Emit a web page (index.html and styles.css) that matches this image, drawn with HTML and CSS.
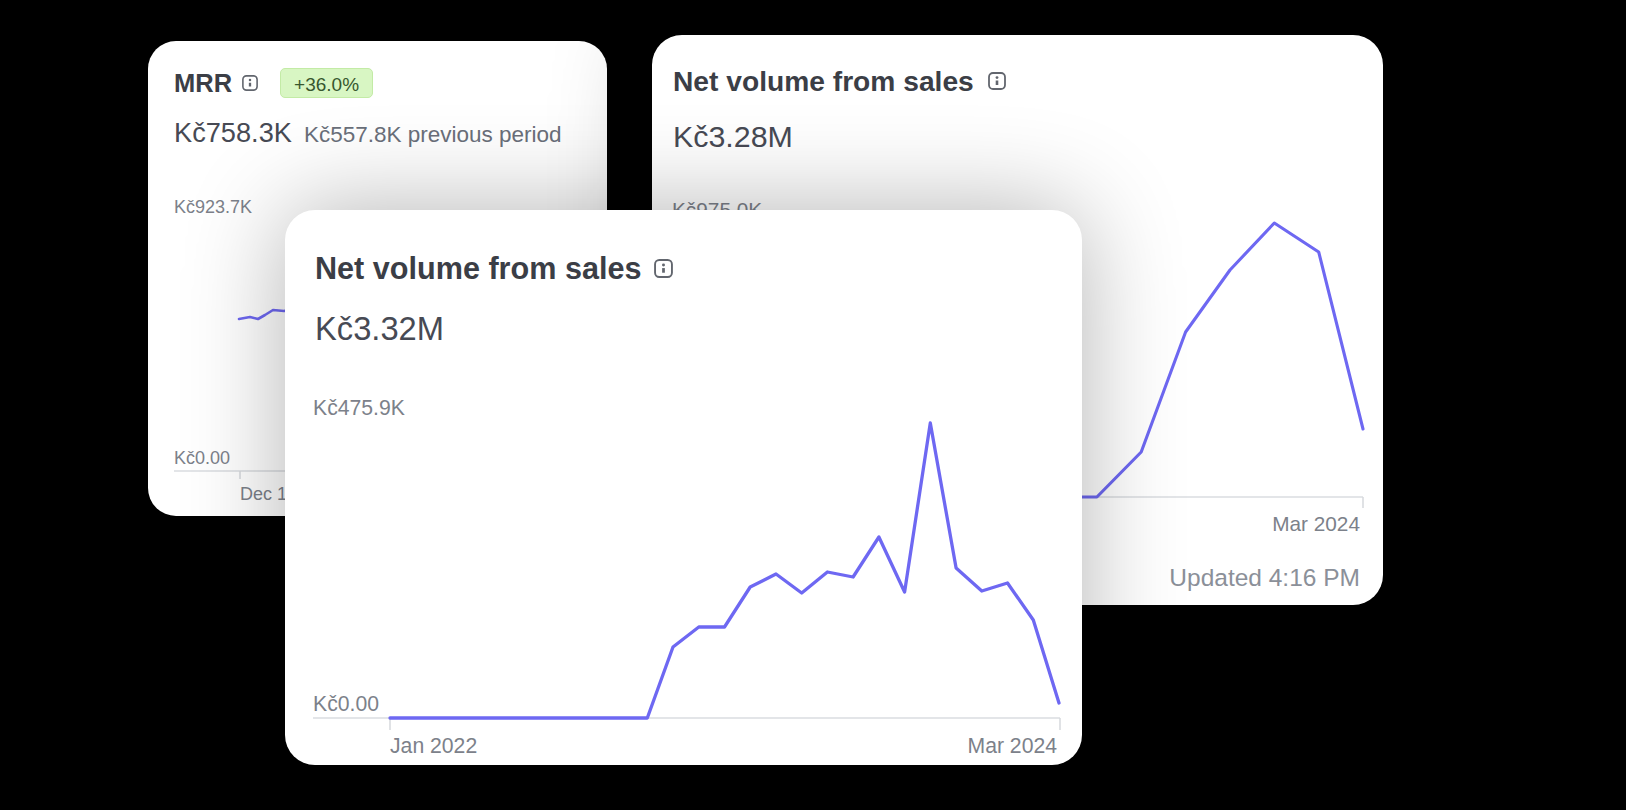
FILE: index.html
```html
<!DOCTYPE html>
<html lang="en">
<head>
<meta charset="utf-8">
<title>Dashboard cards</title>
<link rel="stylesheet" href="styles.css">
</head>
<body>
<div class="stage">

  <section class="card card-mrr">
    <div class="head">
      <h2 class="title">MRR</h2>
      <svg class="info" viewBox="0 0 18 18"><rect x="1" y="1" width="16" height="16" rx="4"/><circle cx="9" cy="5.6" r="1.4"/><path d="M9 8.6v4.4"/></svg>
      <span class="badge">+36.0%</span>
    </div>
    <div class="values">
      <span class="value">Kč758.3K</span>
      <span class="prev">Kč557.8K previous period</span>
    </div>
    <svg class="chart" width="407" height="320" viewBox="0 0 407 320">
      <text class="lbl" x="0" y="21">Kč923.7K</text>
      <text class="lbl" x="0" y="272">Kč0.00</text>
      <line class="axis" x1="0" y1="279" x2="407" y2="279"/>
      <line class="tick" x1="66" y1="279" x2="66" y2="287"/>
      <text class="lbl" x="66" y="308">Dec 1, 2023</text>
      <path class="plot" d="M65 127 L76 125 L84 127 L91 123 L99 118 L110 119 L125 116 L140 112 L160 110 L185 104 L210 100 L240 95 L270 92 L300 88 L330 84 L360 80 L390 76"/>
    </svg>
  </section>

  <section class="card card-net">
    <div class="head">
      <h2 class="title">Net volume from sales</h2>
      <svg class="info" viewBox="0 0 18 18"><rect x="1" y="1" width="16" height="16" rx="4"/><circle cx="9" cy="5.6" r="1.4"/><path d="M9 8.6v4.4"/></svg>
    </div>
    <div class="values">
      <span class="value">Kč3.28M</span>
    </div>
    <svg class="chart" width="688" height="350" viewBox="0 0 688 350">
      <text class="lbl" x="0" y="27">Kč975.0K</text>
      <text class="lbl" x="0" y="300">Kč0.00</text>
      <line class="axis" x1="0" y1="307" x2="691" y2="307"/>
      <line class="tick" x1="70" y1="307" x2="70" y2="318"/>
      <line class="tick" x1="691" y1="307" x2="691" y2="318"/>
      <text class="lbl" x="70" y="341">Jan 2023</text>
      <text class="lbl" x="688" y="341" text-anchor="end">Mar 2024</text>
      <path class="plot" d="M70 307 L424.9 307 L469.2 262 L513.6 142 L558 80 L602.3 33 L646.7 62 L691 239"/>
    </svg>
    <p class="updated">Updated 4:16 PM</p>
  </section>

  <section class="card card-front">
    <div class="head">
      <h2 class="title">Net volume from sales</h2>
      <svg class="info" viewBox="0 0 18 18"><rect x="1" y="1" width="16" height="16" rx="4"/><circle cx="9" cy="5.6" r="1.4"/><path d="M9 8.6v4.4"/></svg>
    </div>
    <div class="values">
      <span class="value">Kč3.32M</span>
    </div>
    <svg class="chart" width="760" height="380" viewBox="0 0 760 380">
      <text class="lbl" x="0" y="35">Kč475.9K</text>
      <text class="lbl" x="0" y="331">Kč0.00</text>
      <line class="axis" x1="0" y1="338" x2="747" y2="338"/>
      <line class="tick" x1="77" y1="338" x2="77" y2="350"/>
      <line class="tick" x1="747" y1="338" x2="747" y2="350"/>
      <text class="lbl" x="77" y="373">Jan 2022</text>
      <text class="lbl" x="744" y="373" text-anchor="end">Mar 2024</text>
      <path class="plot" d="M77 338 L334.3 338 L360 267 L385.8 247 L411.5 247 L437.2 207 L463 194 L488.7 213 L514.4 192 L540.1 197 L565.9 157 L591.6 212 L617.3 43 L643.1 188 L668.8 211 L694.5 203 L720.3 240 L746 323"/>
    </svg>
  </section>

</div>
</body>
</html>
```

FILE: styles.css
```css
html, body {
  margin: 0;
  padding: 0;
  background: #000;
}

body {
  width: 1626px;
  height: 810px;
  overflow: hidden;
  font-family: "Liberation Sans", Arial, sans-serif;
}

.stage {
  position: relative;
  width: 1626px;
  height: 810px;
  background: #000;
}

.card {
  position: absolute;
  box-sizing: border-box;
  background: #fff;
  display: flex;
  flex-direction: column;
  box-shadow: 0 0 100px rgba(0, 0, 0, 0.3);
  overflow: hidden;
}

.head {
  display: flex;
  align-items: center;
}

.title {
  margin: 0;
  font-weight: bold;
  color: #3b3e46;
  white-space: nowrap;
}

.info {
  flex: none;
  fill: none;
  stroke: #62666e;
  stroke-width: 1.8;
  stroke-linecap: round;
}

.info path {
  stroke-width: 2.6;
  stroke-linecap: butt;
}

.info circle {
  fill: #62666e;
  stroke: none;
}

.values {
  display: flex;
  align-items: baseline;
  white-space: nowrap;
}

.value {
  color: #474a54;
}

.prev {
  color: #6a6f7a;
}

.chart {
  display: block;
  flex: none;
  overflow: visible;
}

.lbl {
  fill: #7c818a;
  font-family: "Liberation Sans", Arial, sans-serif;
}

.axis {
  stroke: #e3e5e8;
  stroke-width: 2;
}

.tick {
  stroke: #d6d9dd;
  stroke-width: 1.5;
}

.plot {
  fill: none;
  stroke: #6e68f2;
  stroke-linejoin: round;
  stroke-linecap: round;
}

.badge {
  box-sizing: border-box;
  height: 30px;
  padding: 2px 13px 0;
  line-height: 28px;
  font-size: 19px;
  color: #37572e;
  background: #d8f6c3;
  border: 1px solid #c3eba6;
  border-radius: 5px;
  white-space: nowrap;
}

/* MRR card (smallest scale) */
.card-mrr {
  left: 148px;
  top: 41px;
  width: 459px;
  height: 475px;
  border-radius: 28px;
  padding: 27px 26px 0;
}

.card-mrr .head { height: 30px; }
.card-mrr .title { font-size: 25.5px; line-height: 30px; }
.card-mrr .info { width: 16px; height: 16px; margin-left: 10px; }
.card-mrr .badge { margin-left: 22px; }
.card-mrr .values { margin-top: 18.6px; gap: 12px; }
.card-mrr .value { font-size: 27.2px; line-height: 32px; }
.card-mrr .prev { font-size: 22.5px; line-height: 32px; }
.card-mrr .chart { margin-top: 41.4px; }
.card-mrr .lbl { font-size: 18px; }
.card-mrr .plot { stroke-width: 2.6; }

/* Net volume card behind */
.card-net {
  left: 652px;
  top: 35px;
  width: 731px;
  height: 570px;
  border-radius: 30px;
  padding: 29.2px 23px 0 21px;
}

.card-net .head { height: 34px; }
.card-net .title { font-size: 28.2px; line-height: 34px; }
.card-net .info { width: 18px; height: 18px; margin-left: 14px; }
.card-net .values { margin-top: 20.3px; }
.card-net .value { font-size: 30.4px; line-height: 36px; }
.card-net .chart { margin-top: 35.5px; margin-left: -1px; }
.card-net .lbl { font-size: 20.8px; }
.card-net .plot { stroke-width: 3.1; }

.updated {
  margin: 23.5px 0 0;
  text-align: right;
  font-size: 24.5px;
  line-height: 30px;
  color: #8b9099;
}

/* Front card */
.card-front {
  left: 285px;
  top: 210px;
  width: 797px;
  height: 555px;
  border-radius: 30px;
  padding: 40.4px 30px 0;
}

.card-front .head { height: 36px; }
.card-front .title { font-size: 30.6px; line-height: 36px; }
.card-front .info { width: 19px; height: 19px; margin-left: 13px; }
.card-front .values { margin-top: 23.3px; }
.card-front .value { font-size: 32.7px; line-height: 38px; }
.card-front .chart { margin-top: 32.3px; margin-left: -2px; }
.card-front .lbl { font-size: 21.2px; }
.card-front .plot { stroke-width: 3.3; }
```
